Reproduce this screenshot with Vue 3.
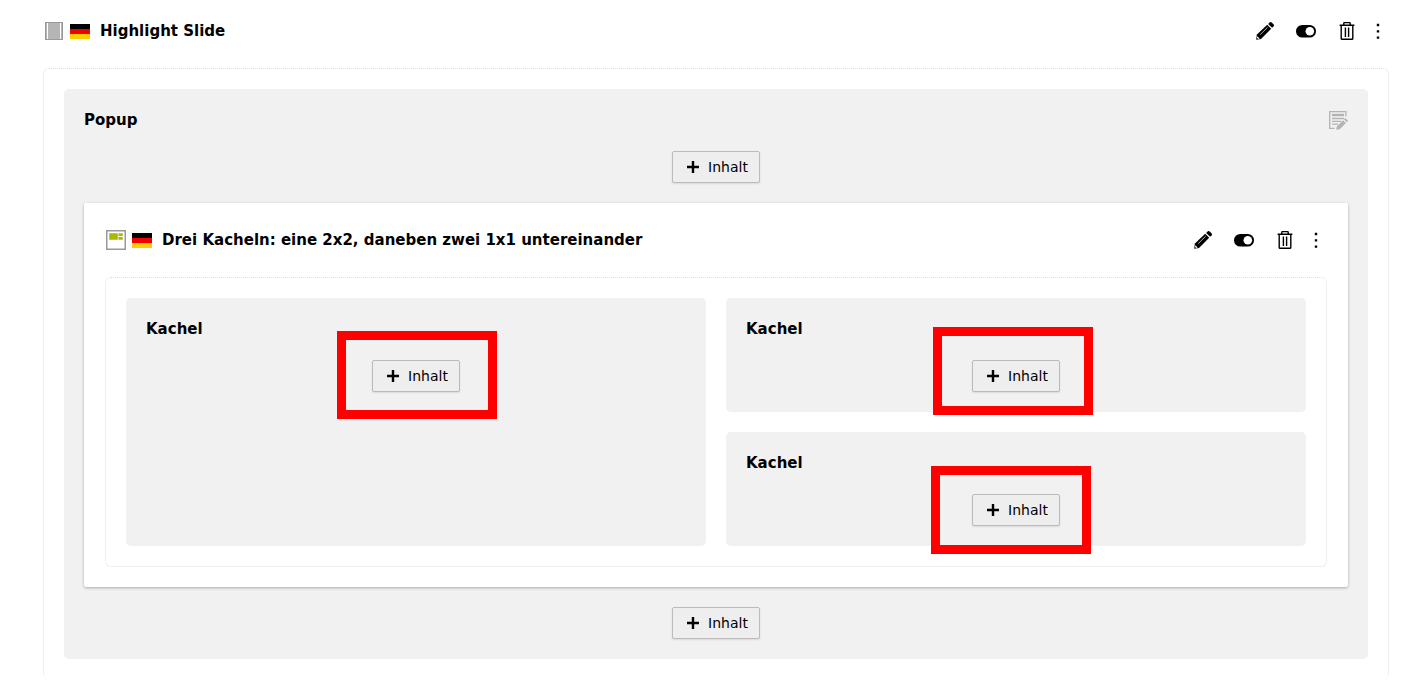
<template>
  <main class="page">
    <section class="element">
      <header class="element-header">
        <div class="element-title">
          <svg class="type-icon" width="20" height="20" viewBox="0 0 20 20" aria-hidden="true">
            <rect x="1.5" y="1.5" width="17" height="17" fill="#fff" stroke="#999" />
            <rect x="4" y="2" width="12" height="16" fill="#b5b5b5" />
            <path d="M2.5 2v16M17.5 2v16" stroke="#b5b5b5" />
          </svg>
          <svg class="flag" width="20" height="15" viewBox="0 0 20 15" role="img" aria-label="Deutsch">
            <rect width="20" height="5" fill="#000" />
            <rect y="5" width="20" height="5" fill="#f00000" />
            <rect y="10" width="20" height="5" fill="#fc0" />
          </svg>
          <h1>Highlight Slide</h1>
        </div>
        <div class="actions">
          <button v-for="action in actions" :key="action.name" type="button" class="action" :class="action.name" :aria-label="action.label">
            <svg width="20" height="20" viewBox="0 0 20 20" v-html="action.icon"></svg>
          </button>
        </div>
      </header>

      <div class="container open">
        <section class="column">
          <div class="column-header">
            <h2>Popup</h2>
            <button type="button" class="edit-column" aria-label="Spalte bearbeiten">
              <svg width="20" height="20" viewBox="0 0 20 20" fill="none" stroke="#b3b3b3" stroke-width="1.3">
                <path d="M6.5 18.4H1.7V1.6h16.2v5" />
                <path d="M4 5h12" stroke-width="2.4" />
                <path d="M4 8.5h12M4 11.4h9M4 14.2h6" />
                <path d="M8.8 16.4l6.2-6.2 2.9 2.9-6.2 6.2-3.4.5zM15.9 9.3l1.3-1.3 2.9 2.9-1.3 1.3z" fill="#b3b3b3" stroke="none" />
              </svg>
            </button>
          </div>
          <button type="button" class="add-button">
            <svg width="14" height="14" viewBox="0 0 14 14" aria-hidden="true"><path d="M7 1v12M1 7h12" /></svg>
            Inhalt
          </button>

          <section class="element card">
            <header class="element-header">
              <div class="element-title">
                <svg class="type-icon" width="20" height="20" viewBox="0 0 20 20" aria-hidden="true">
                  <rect x=".75" y=".75" width="18.5" height="18.5" fill="#fff" stroke="#999" stroke-width="1.5" />
                  <path d="M3.2 3.2h8.6v6.6H3.2zM12.5 3.2h4.3v2.9h-4.3zM12.5 6.9h4.3v2.9h-4.3z" fill="#abb800" />
                </svg>
                <svg class="flag" width="20" height="15" viewBox="0 0 20 15" role="img" aria-label="Deutsch">
                  <rect width="20" height="5" fill="#000" />
                  <rect y="5" width="20" height="5" fill="#f00000" />
                  <rect y="10" width="20" height="5" fill="#fc0" />
                </svg>
                <h3>Drei Kacheln: eine 2x2, daneben zwei 1x1 untereinander</h3>
              </div>
              <div class="actions">
                <button v-for="action in actions" :key="action.name" type="button" class="action" :class="action.name" :aria-label="action.label">
                  <svg width="20" height="20" viewBox="0 0 20 20" v-html="action.icon"></svg>
                </button>
              </div>
            </header>

            <div class="container tiles">
              <section v-for="tile in tiles" :key="tile" class="tile" :class="tile">
                <h4>Kachel</h4>
                <div class="marked">
                  <button type="button" class="add-button">
                    <svg width="14" height="14" viewBox="0 0 14 14" aria-hidden="true"><path d="M7 1v12M1 7h12" /></svg>
                    Inhalt
                  </button>
                  <span class="marker"></span>
                </div>
              </section>
            </div>
          </section>

          <button type="button" class="add-button">
            <svg width="14" height="14" viewBox="0 0 14 14" aria-hidden="true"><path d="M7 1v12M1 7h12" /></svg>
            Inhalt
          </button>
        </section>
      </div>
    </section>
  </main>
</template>

<script setup>
const tiles = ['large', 'upper', 'lower'];

const actions = [
  {
    name: 'edit',
    label: 'Bearbeiten',
    icon: '<path d="M1.2 18.8l.7-5.2L12.2 3.8l4 4L6 18z"/><path d="M13.2 2.9l1.6-1.6q.8-.7 1.6 0l2.3 2.3q.7.8 0 1.6l-1.6 1.6z"/><path d="M5.2 13.6l7.4-7.3" stroke="#fff" stroke-width=".7"/><path d="M2.3 15.2l2.4 2.4-1.6.4-1-1z" fill="#fff"/>'
  },
  {
    name: 'toggle',
    label: 'Deaktivieren',
    icon: '<rect x="0" y="4" width="20" height="12.6" rx="6.3"/><circle cx="13.8" cy="10.3" r="4.3" fill="#fff"/>'
  },
  {
    name: 'delete',
    label: 'Löschen',
    icon: '<path d="M2.6 4.2h14.8M6.8 4V2.2q0-.6.6-.6h5.2q.6 0 .6.6V4M4.2 4.5v13q0 .8.8.8h10q.8 0 .8-.8v-13M8.4 6.4v9.6M11.6 6.4v9.6" fill="none" stroke="#000" stroke-width="1.4"/>'
  },
  {
    name: 'more',
    label: 'Weitere Optionen',
    icon: '<path d="M8.8 2.8h2.4v2.4H8.8zM8.8 9.2h2.4v2.4H8.8zM8.8 15.4h2.4v2.4H8.8z"/>'
  }
];
</script>

<style>
body {
  margin: 0;
  background: #fff;
}
</style>

<style scoped>
.page {
  padding: 14px 23px 16px 43px;
  font-family: Verdana, 'DejaVu Sans', sans-serif;
  color: #000;
}

h1,
h2,
h3,
h4 {
  margin: 0;
  font-size: 15px;
  line-height: 22px;
  font-weight: 700;
}

button {
  font-family: inherit;
  color: inherit;
  cursor: pointer;
}

.element-header {
  display: flex;
  align-items: center;
  justify-content: space-between;
  height: 34px;
  margin-bottom: 20px;
}

.element-title {
  display: flex;
  align-items: center;
  padding-left: 1px;
}

.flag {
  margin: 0 10px 0 6px;
}

.actions {
  display: flex;
  padding-right: 1px;
}

.action {
  display: flex;
  align-items: center;
  justify-content: center;
  width: 41px;
  height: 34px;
  padding: 0;
  border: none;
  background: none;
}

.action.more {
  width: 21px;
}

.action svg {
  flex: none;
}

.container {
  padding: 20px;
  border: 1px dotted #ddd;
  border-radius: 6px;
}

.container.open {
  border-bottom: none;
}

.column {
  display: flex;
  flex-direction: column;
  align-items: center;
  gap: 20px;
  padding: 20px;
  border-radius: 5px;
  background: #f1f1f1;
}

.column-header {
  display: flex;
  align-items: center;
  justify-content: space-between;
  align-self: stretch;
  height: 22px;
}

.edit-column {
  display: flex;
  padding: 0;
  border: none;
  background: none;
}

.add-button {
  display: flex;
  align-items: center;
  gap: 8px;
  height: 32px;
  padding: 0 11px 0 13px;
  border: 1px solid #bbb;
  border-radius: 2px;
  background: #eee;
  box-shadow: 0 1px 2px rgba(0, 0, 0, 0.1);
  font-size: 14px;
  line-height: 20px;
}

.add-button path {
  stroke: #000;
  stroke-width: 2.4;
}

.card {
  align-self: stretch;
  padding: 20px 21px;
  background: #fff;
  border-radius: 2px;
  box-shadow: 0 1px 3px rgba(0, 0, 0, 0.3);
}

.tiles {
  display: grid;
  grid-template-columns: 1fr 1fr;
  gap: 20px;
}

.tile {
  display: flex;
  flex-direction: column;
  gap: 20px;
  padding: 20px;
  border-radius: 5px;
  background: #f1f1f1;
}

.tile.large {
  grid-row: span 2;
}

.marked {
  position: relative;
  align-self: center;
}

/* red frame drawn over the button, each one placed by hand */
.marker {
  position: absolute;
  top: -29px;
  left: -35px;
  z-index: 1;
  box-sizing: border-box;
  width: 160px;
  height: 88px;
  border: 9px solid #f00;
  pointer-events: none;
}

.upper .marker {
  top: -33px;
  left: -39px;
}

.lower .marker {
  top: -28px;
  left: -41px;
}
</style>
